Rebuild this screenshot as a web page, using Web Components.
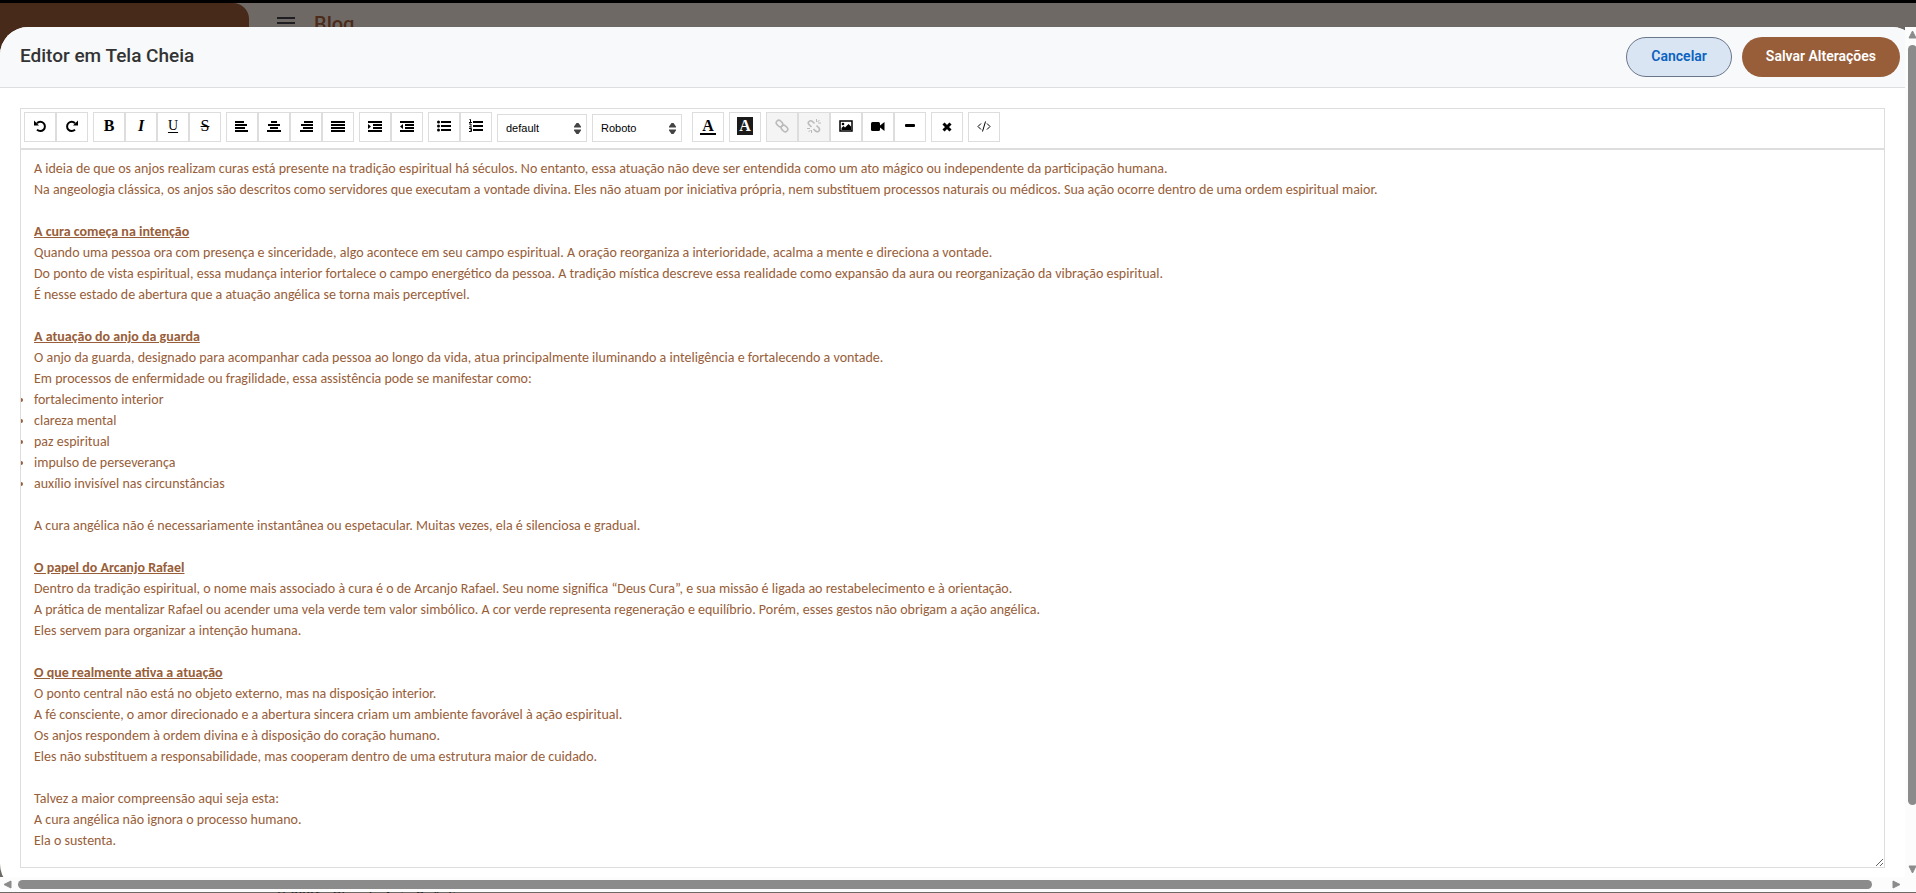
<!DOCTYPE html>
<html lang="pt-BR">
<head>
<meta charset="utf-8">
<title>Blog</title>
<style>
    html, body {
        height: 100%;
        margin: 0;
        overflow: hidden;
        font-family: Roboto, "Liberation Sans", sans-serif;
    }
</style>
</head>
<body>
<blog-page></blog-page>
<fullscreen-dialog>
    <dialog-header slot="header" heading="Editor em Tela Cheia"></dialog-header>
    <editor-toolbar slot="toolbar"></editor-toolbar>
    <rich-text slot="content">
        <p>A ideia de que os anjos realizam curas está presente na tradição espiritual há séculos. No entanto, essa atuação não deve ser entendida como um ato mágico ou independente da participação humana.</p>
        <p>Na angeologia clássica, os anjos são descritos como servidores que executam a vontade divina. Eles não atuam por iniciativa própria, nem substituem processos naturais ou médicos. Sua ação ocorre dentro de uma ordem espiritual maior.</p>
        <p><br></p>
        <p><b><u>A cura começa na intenção</u></b></p>
        <p>Quando uma pessoa ora com presença e sinceridade, algo acontece em seu campo espiritual. A oração reorganiza a interioridade, acalma a mente e direciona a vontade.</p>
        <p>Do ponto de vista espiritual, essa mudança interior fortalece o campo energético da pessoa. A tradição mística descreve essa realidade como expansão da aura ou reorganização da vibração espiritual.</p>
        <p>É nesse estado de abertura que a atuação angélica se torna mais perceptível.</p>
        <p><br></p>
        <p><b><u>A atuação do anjo da guarda</u></b></p>
        <p>O anjo da guarda, designado para acompanhar cada pessoa ao longo da vida, atua principalmente iluminando a inteligência e fortalecendo a vontade.</p>
        <p>Em processos de enfermidade ou fragilidade, essa assistência pode se manifestar como:</p>
        <ul>
            <li>fortalecimento interior</li>
            <li>clareza mental</li>
            <li>paz espiritual</li>
            <li>impulso de perseverança</li>
            <li>auxílio invisível nas circunstâncias</li>
        </ul>
        <p><br></p>
        <p>A cura angélica não é necessariamente instantânea ou espetacular. Muitas vezes, ela é silenciosa e gradual.</p>
        <p><br></p>
        <p><b><u>O papel do Arcanjo Rafael</u></b></p>
        <p>Dentro da tradição espiritual, o nome mais associado à cura é o de Arcanjo Rafael. Seu nome significa “Deus Cura”, e sua missão é ligada ao restabelecimento e à orientação.</p>
        <p>A prática de mentalizar Rafael ou acender uma vela verde tem valor simbólico. A cor verde representa regeneração e equilíbrio. Porém, esses gestos não obrigam a ação angélica.</p>
        <p>Eles servem para organizar a intenção humana.</p>
        <p><br></p>
        <p><b><u>O que realmente ativa a atuação</u></b></p>
        <p>O ponto central não está no objeto externo, mas na disposição interior.</p>
        <p>A fé consciente, o amor direcionado e a abertura sincera criam um ambiente favorável à ação espiritual.</p>
        <p>Os anjos respondem à ordem divina e à disposição do coração humano.</p>
        <p>Eles não substituem a responsabilidade, mas cooperam dentro de uma estrutura maior de cuidado.</p>
        <p><br></p>
        <p>Talvez a maior compreensão aqui seja esta:</p>
        <p>A cura angélica não ignora o processo humano.</p>
        <p>Ela o sustenta.</p>
    </rich-text>
</fullscreen-dialog>

<script>
class BlogPage extends HTMLElement {

    constructor(){
        super();
        this.shadowDOM = this.attachShadow({mode:"open"});
    }

    connectedCallback(){
        this.render();
    }

    render(){
        this.shadowDOM.innerHTML = `
        <style>
            :host {
                display: flex;
                box-sizing: border-box;
                height: 100%;
                border-top: 3px solid #000;
                background: #6f6965;
            }
            aside {
                flex: 0 0 249px;
                margin-bottom: 40px;
                border-radius: 0 16px 16px 0;
                background: #482a1b;
            }
            main {
                flex: 1;
                display: flex;
                flex-direction: column;
                justify-content: space-between;
                padding-left: 27px;
            }
            header {
                display: flex;
                align-items: center;
                gap: 18px;
                height: 42px;
            }
            button {
                display: flex;
                padding: 0;
                border: 0;
                background: none;
            }
            h1 {
                margin: 0;
                font-size: 20px;
                font-weight: 500;
                color: #4c2b1b;
            }
            footer {
                height: 4px;
                font-size: 14px;
                line-height: 16px;
                color: #222;
            }
        </style>
        <aside></aside>
        <main>
            <header>
                <button aria-label="Menu">
                    <svg width="20" height="14" stroke="#1d1d22" stroke-width="2"><path d="M1 1h18M1 6h18M1 11h18"/></svg>
                </button>
                <h1>Blog</h1>
            </header>
            <footer>© 2026 - Blog do Anjo Quântico</footer>
        </main>`;
    }
}

class FullscreenDialog extends HTMLElement {

    constructor(){
        super();
        this.shadowDOM = this.attachShadow({mode:"open"});
    }

    connectedCallback(){
        this.render();
    }

    render(){
        // the surface runs under both scroll bars, so its corners show beside them
        this.shadowDOM.innerHTML = `
        <style>
            :host {
                position: fixed;
                inset: 27px -4px 1px 0;
                display: grid;
                grid-template: minmax(0, 1fr) 15px / minmax(0, 1fr) 15px;
            }
            .surface {
                grid-area: 1 / 1 / 3 / 3;
                display: flex;
                flex-direction: column;
                min-height: 0;
                overflow: hidden;
                border-radius: 28px;
                background: #fff;
            }
            .body {
                flex: 1;
                display: flex;
                flex-direction: column;
                min-height: 0;
                padding: 20px 35px 24px 20px;
            }
            .editor {
                flex: 1;
                display: flex;
                flex-direction: column;
                min-height: 0;
            }
            ::slotted([slot="content"]) {
                flex: 1;
            }
            .vertical {
                grid-area: 1 / 2;
            }
            .horizontal {
                grid-area: 2 / 1 / 3 / 3;
            }
        </style>
        <div class="surface" role="dialog" aria-label="Editor em Tela Cheia">
            <slot name="header"></slot>
            <div class="body">
                <div class="editor">
                    <slot name="toolbar"></slot>
                    <slot name="content"></slot>
                </div>
            </div>
        </div>
        <scroll-track class="vertical"></scroll-track>
        <scroll-track class="horizontal" horizontal></scroll-track>`;
    }
}

class ScrollTrack extends HTMLElement {

    constructor(){
        super();
        this.shadowDOM = this.attachShadow({mode:"open"});
    }

    connectedCallback(){
        this.render();
    }

    render(){
        const across = this.hasAttribute("horizontal");
        const start = across ? "M8 1v7L1 4.5z" : "M1 8h7L4.5 1z";
        const end = across ? "M1 1v7L8 4.5z" : "M1 1h7L4.5 8z";
        this.shadowDOM.innerHTML = `
        <style>
            :host {
                display: flex;
                flex-direction: column;
                align-items: center;
                box-sizing: border-box;
                padding: 3px 0;
                gap: 6px;
                background: #fcfcfc;
            }
            :host([horizontal]) {
                flex-direction: row;
                padding: 0 19px 0 3px;
            }
            svg {
                flex: none;
                width: 9px;
                height: 9px;
                fill: #8b8b8b;
                stroke: #8b8b8b;
                stroke-linejoin: round;
            }
            .rail {
                flex: 1;
                display: flex;
                flex-direction: column;
                width: 9px;
                padding-bottom: 54px;
            }
            .thumb {
                flex: 1;
                border-radius: 5px;
                background: #8b8b8b;
            }
            :host([horizontal]) .rail {
                flex-direction: row;
                width: auto;
                height: 9px;
                padding: 0 14px 0 0;
            }
        </style>
        <svg><path d="${start}"/></svg>
        <div class="rail"><div class="thumb"></div></div>
        <svg><path d="${end}"/></svg>`;
    }
}

class DialogHeader extends HTMLElement {

    constructor(){
        super();
        this.shadowDOM = this.attachShadow({mode:"open"});
    }

    connectedCallback(){
        this.render();
    }

    render(){
        this.shadowDOM.innerHTML = `
        <style>
            :host {
                display: flex;
                align-items: center;
                justify-content: space-between;
                padding: 10px 20px;
                border-bottom: 1px solid #ddd;
                background: #f8f9fb;
            }
            h2 {
                margin: 0 0 4px;
                font-size: 19px;
                font-weight: 500;
                color: #333;
            }
            .actions {
                display: flex;
                gap: 10px;
            }
            button {
                height: 40px;
                padding: 0 24px 2px;
                border: 0;
                border-radius: 20px;
                background: #985e39;
                font: 600 14px Roboto, sans-serif;
                color: #fff;
            }
            .cancel {
                border: 1px solid #6a7689;
                background: #d9e5f3;
                color: #0b62c1;
            }
        </style>
        <h2>${this.getAttribute("heading")}</h2>
        <div class="actions">
            <button class="cancel">Cancelar</button>
            <button>Salvar Alterações</button>
        </div>`;
    }
}

const icons = {
    undo: `<path d="M4 4.2A4.6 4.6 0 1 1 4 10.6" fill="none" stroke="currentColor" stroke-width="2"/><path d="M1 1.5V6.5H6z"/>`,
    redo: `<path d="M10 4.2A4.6 4.6 0 1 0 10 10.6" fill="none" stroke="currentColor" stroke-width="2"/><path d="M13 1.5V6.5H8z"/>`,
    left: `<path d="M0 2h9v2H0zM0 5h12v2H0zM0 8h10v2H0zM0 11h13v2H0z"/>`,
    center: `<path d="M4 2h6v2H4zM1 5h12v2H1zM3 8h8v2H3zM0 11h14v2H0z"/>`,
    right: `<path d="M5 2h9v2H5zM2 5h12v2H2zM4 8h10v2H4zM1 11h13v2H1z"/>`,
    full: `<path d="M0 2h14v2H0zM0 5h14v2H0zM0 8h14v2H0zM0 11h14v2H0z"/>`,
    indent: `<path d="M0 2h14v2H0zM5 5h9v2H5zM5 8h9v2H5zM0 11h14v2H0zM0 5l3 2.5-3 2.5z"/>`,
    outdent: `<path d="M0 2h14v2H0zM5 5h9v2H5zM5 8h9v2H5zM0 11h14v2H0zM3 5v5L0 7.5z"/>`,
    bullets: `<path d="M4 2h10v2H4zM4 6h10v2H4zM4 10h10v2H4z"/><circle cx="1.5" cy="3" r="1.5"/><circle cx="1.5" cy="7" r="1.5"/><circle cx="1.5" cy="11" r="1.5"/>`,
    numbers: `<path d="M4 2h10v2H4zM4 6h10v2H4zM4 10h10v2H4z"/><path d="M0.5 0.5h1v3M0 3.5h3M0 5h2v1.5L0.5 8H3M0 9.5h2.5v3H0M1 11h1.5" fill="none" stroke="currentColor"/>`,
    link: `<g fill="none" stroke="currentColor" stroke-width="1.6"><rect x="1" y="2" width="7" height="5" rx="2.5" transform="rotate(45 4.5 4.5)"/><rect x="6" y="7" width="7" height="5" rx="2.5" transform="rotate(45 9.5 9.5)"/></g>`,
    unlink: `<g fill="none" stroke="currentColor" stroke-width="1.6"><path d="M4.5 8L2 5.5Q0.5 4 2 2.5T5.5 2.5L7.5 4.5M9.5 6.5L12 9Q13 10.5 12 12T8.5 12L6.5 10"/><path d="M9.5 0v3M11 4h3M12.5 1L10.5 3M0 9.5h3M4.5 11v3M1.5 13L3.5 11" stroke-width="1"/></g>`,
    image: `<path d="M1 2h12v10H1z" fill="none" stroke="currentColor" stroke-width="1.5"/><circle cx="4" cy="5" r="1.3"/><path d="M2.5 11V9l2-2 1.5 1.5L9.5 5 12 7.5V11z"/>`,
    video: `<rect x="0" y="3" width="9" height="9" rx="1.5"/><path d="M9 6.5L13.5 3v9L9 8.5z"/>`,
    line: `<rect x="2" y="5" width="10" height="3" rx="1"/>`,
    clear: `<path d="M3.500 4.5l7 7M10.500 4.5l-7 7" stroke="currentColor" stroke-width="3"/>`,
    code: `<path d="M4 4.5L1 7.5l3 3M10 4.5l3 3-3 3M8.500 2.5l-3 10" fill="none" stroke="currentColor"/>`
};

class ToolButton extends HTMLElement {

    constructor(){
        super();
        this.shadowDOM = this.attachShadow({mode:"open"});
    }

    connectedCallback(){
        this.render();
    }

    render(){
        const icon = icons[this.getAttribute("icon")];
        const off = this.hasAttribute("disabled") ? "disabled" : "";
        this.shadowDOM.innerHTML = `
        <style>
            :host {
                display: block;
            }
            button {
                display: flex;
                align-items: center;
                justify-content: center;
                box-sizing: border-box;
                width: 32px;
                height: 30px;
                padding: 0 0 2px;
                border: 1px solid #ddd;
                background: #fff;
                font: bold 16px "Liberation Serif", serif;
                color: #000;
            }
            button:disabled {
                background: #f4f4f4;
                color: #bbb;
            }
            svg {
                width: 14px;
                height: 14px;
                fill: currentColor;
            }
        </style>
        <button title="${this.getAttribute("label")}" aria-label="${this.getAttribute("label")}" ${off}>
            ${icon ? `<svg viewBox="0 0 14 14">${icon}</svg>` : "<slot></slot>"}
        </button>`;
    }
}

class ToolSelect extends HTMLElement {

    constructor(){
        super();
        this.shadowDOM = this.attachShadow({mode:"open"});
    }

    connectedCallback(){
        this.render();
    }

    render(){
        this.shadowDOM.innerHTML = `
        <style>
            :host {
                display: grid;
                align-items: center;
                width: 90px;
                height: 28px;
            }
            select, svg {
                grid-area: 1 / 1;
            }
            select {
                appearance: none;
                box-sizing: border-box;
                width: 100%;
                height: 100%;
                padding: 0 8px;
                border: 1px solid #ddd;
                border-radius: 0;
                background: #fff;
                font: 11px "Liberation Sans", sans-serif;
                color: #000;
            }
            svg {
                justify-self: end;
                margin-right: 6px;
                width: 7px;
                height: 11px;
                fill: #444;
                pointer-events: none;
            }
        </style>
        <select aria-label="${this.getAttribute("label")}">
            <option>${this.getAttribute("value")}</option>
        </select>
        <svg viewBox="0 0 7 11"><path d="M0 4.5V3.5L2.5 0h2L7 3.5v1zM0 6.5h7v1L4.500 11h-2L0 7.5z"/></svg>`;
    }
}

class EditorToolbar extends HTMLElement {

    constructor(){
        super();
        this.shadowDOM = this.attachShadow({mode:"open"});
    }

    connectedCallback(){
        this.render();
    }

    render(){
        this.shadowDOM.innerHTML = `
        <style>
            :host {
                display: flex;
                flex-wrap: wrap;
                align-items: flex-end;
                gap: 5px;
                padding: 3px 3px 6px;
                border: 1px solid #ddd;
                background: #fff;
            }
            .group {
                display: flex;
            }
            .selects {
                gap: 5px;
                margin-right: 5px;
            }
            s, u {
                text-decoration-thickness: 1px;
                font-weight: normal;
            }
            u {
                font-size: 14px;
                text-underline-offset: 2px;
            }
            .color {
                padding: 0 2px;
                border-bottom: 2px solid #000;
                line-height: 15px;
            }
            .fill {
                width: 16px;
                background: #1b1b1b;
                line-height: 18px;
                text-align: center;
                color: #fff;
            }
        </style>
        <div class="group">
            <tool-button icon="undo" label="Undo"></tool-button>
            <tool-button icon="redo" label="Redo"></tool-button>
        </div>
        <div class="group">
            <tool-button label="Bold"><b>B</b></tool-button>
            <tool-button label="Italic"><i>I</i></tool-button>
            <tool-button label="Underline"><u>U</u></tool-button>
            <tool-button label="Strikethrough"><s>S</s></tool-button>
        </div>
        <div class="group">
            <tool-button icon="left" label="Justify Left"></tool-button>
            <tool-button icon="center" label="Justify Center"></tool-button>
            <tool-button icon="right" label="Justify Right"></tool-button>
            <tool-button icon="full" label="Justify Full"></tool-button>
        </div>
        <div class="group">
            <tool-button icon="indent" label="Indent"></tool-button>
            <tool-button icon="outdent" label="Outdent"></tool-button>
        </div>
        <div class="group">
            <tool-button icon="bullets" label="Unordered List"></tool-button>
            <tool-button icon="numbers" label="Ordered List"></tool-button>
        </div>
        <div class="group selects">
            <tool-select label="Heading" value="default"></tool-select>
            <tool-select label="Font" value="Roboto"></tool-select>
        </div>
        <tool-button label="Text Color"><span class="color">A</span></tool-button>
        <tool-button label="Background Color"><span class="fill">A</span></tool-button>
        <div class="group">
            <tool-button icon="link" label="Insert Link" disabled></tool-button>
            <tool-button icon="unlink" label="Unlink" disabled></tool-button>
            <tool-button icon="image" label="Insert Image"></tool-button>
            <tool-button icon="video" label="Insert Video"></tool-button>
            <tool-button icon="line" label="Horizontal Line"></tool-button>
        </div>
        <tool-button icon="clear" label="Clear Formatting"></tool-button>
        <tool-button icon="code" label="HTML Code"></tool-button>`;
    }
}

class RichText extends HTMLElement {

    constructor(){
        super();
        this.shadowDOM = this.attachShadow({mode:"open"});
    }

    connectedCallback(){
        this.render();
    }

    render(){
        this.shadowDOM.innerHTML = `
        <style>
            :host {
                display: flex;
                min-height: 0;
            }
            .area {
                flex: 1;
                box-sizing: border-box;
                padding: 8px 13px;
                border: 1px solid #ddd;
                overflow: auto;
                resize: vertical;
                font: 14px/21px Carlito, Calibri, Lato, sans-serif;
                color: #985e39;
            }
            ::slotted(p), ::slotted(ul) {
                margin: 0;
                padding: 0;
            }
        </style>
        <div class="area" contenteditable="true" role="textbox" aria-multiline="true" aria-label="Conteúdo">
            <slot></slot>
        </div>`;
    }
}

customElements.define("blog-page", BlogPage);
customElements.define("scroll-track", ScrollTrack);
customElements.define("fullscreen-dialog", FullscreenDialog);
customElements.define("dialog-header", DialogHeader);
customElements.define("tool-button", ToolButton);
customElements.define("tool-select", ToolSelect);
customElements.define("editor-toolbar", EditorToolbar);
customElements.define("rich-text", RichText);
</script>
</body>
</html>
